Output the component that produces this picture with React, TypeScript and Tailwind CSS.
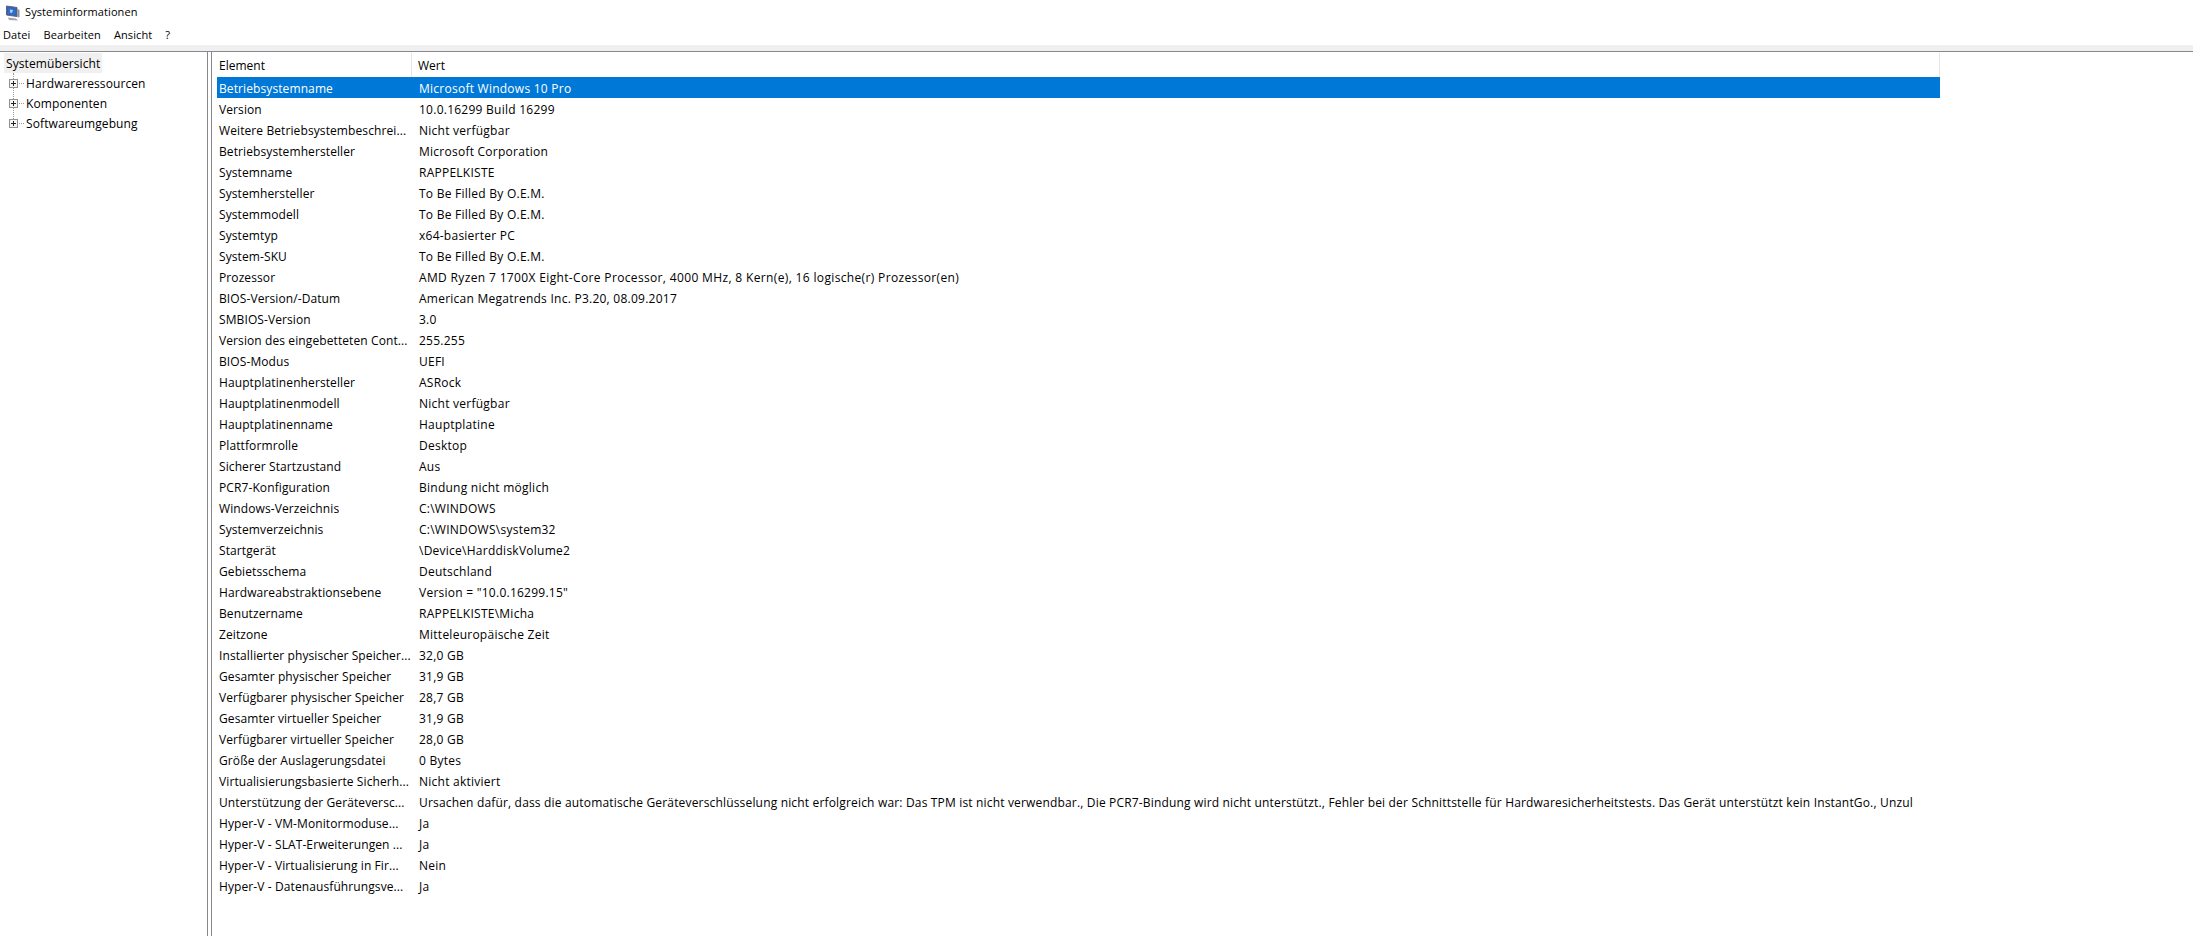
import React from 'react';

const rows: [string, string][] = [
  ['Betriebsystemname', 'Microsoft Windows 10 Pro'],
  ['Version', '10.0.16299 Build 16299'],
  ['Weitere Betriebsystembeschrei...', 'Nicht verfügbar'],
  ['Betriebsystemhersteller', 'Microsoft Corporation'],
  ['Systemname', 'RAPPELKISTE'],
  ['Systemhersteller', 'To Be Filled By O.E.M.'],
  ['Systemmodell', 'To Be Filled By O.E.M.'],
  ['Systemtyp', 'x64-basierter PC'],
  ['System-SKU', 'To Be Filled By O.E.M.'],
  ['Prozessor', 'AMD Ryzen 7 1700X Eight-Core Processor, 4000 MHz, 8 Kern(e), 16 logische(r) Prozessor(en)'],
  ['BIOS-Version/-Datum', 'American Megatrends Inc. P3.20, 08.09.2017'],
  ['SMBIOS-Version', '3.0'],
  ['Version des eingebetteten Cont...', '255.255'],
  ['BIOS-Modus', 'UEFI'],
  ['Hauptplatinenhersteller', 'ASRock'],
  ['Hauptplatinenmodell', 'Nicht verfügbar'],
  ['Hauptplatinenname', 'Hauptplatine'],
  ['Plattformrolle', 'Desktop'],
  ['Sicherer Startzustand', 'Aus'],
  ['PCR7-Konfiguration', 'Bindung nicht möglich'],
  ['Windows-Verzeichnis', 'C:\\WINDOWS'],
  ['Systemverzeichnis', 'C:\\WINDOWS\\system32'],
  ['Startgerät', '\\Device\\HarddiskVolume2'],
  ['Gebietsschema', 'Deutschland'],
  ['Hardwareabstraktionsebene', 'Version = "10.0.16299.15"'],
  ['Benutzername', 'RAPPELKISTE\\Micha'],
  ['Zeitzone', 'Mitteleuropäische Zeit'],
  ['Installierter physischer Speicher...', '32,0 GB'],
  ['Gesamter physischer Speicher', '31,9 GB'],
  ['Verfügbarer physischer Speicher', '28,7 GB'],
  ['Gesamter virtueller Speicher', '31,9 GB'],
  ['Verfügbarer virtueller Speicher', '28,0 GB'],
  ['Größe der Auslagerungsdatei', '0 Bytes'],
  ['Virtualisierungsbasierte Sicherh...', 'Nicht aktiviert'],
  ['Unterstützung der Geräteversc...', 'Ursachen dafür, dass die automatische Geräteverschlüsselung nicht erfolgreich war: Das TPM ist nicht verwendbar., Die PCR7-Bindung wird nicht unterstützt., Fehler bei der Schnittstelle für Hardwaresicherheitstests. Das Gerät unterstützt kein InstantGo., Unzul'],
  ['Hyper-V - VM-Monitormoduse...', 'Ja'],
  ['Hyper-V - SLAT-Erweiterungen ...', 'Ja'],
  ['Hyper-V - Virtualisierung in Fir...', 'Nein'],
  ['Hyper-V - Datenausführungsve...', 'Ja'],
];

const AppIcon = () => (
  <svg width="16" height="16" viewBox="0 0 16 16" className="shrink-0">
    <path d="M1.5 1 L12 2.5 V11.5 L1.5 10 Z" fill="#3f5f9e" stroke="#5a6480" strokeWidth="1" />
    <path d="M3 3 L10.5 4 V10 L3 9 Z" fill="#2b6fd6" />
    <path d="M5 4.5 L8 5 L7 8 L5 7.5 Z" fill="#a8d0f5" />
    <path d="M3 12.5 L11 13.5 L13 15.5 L4 15 Z" fill="#a3a6ad" />
    <path d="M12.5 4 L14.5 5 V12 L12.5 12.5 Z" fill="#8d919a" />
  </svg>
);

const TreeItem = ({label}: {label: string}) => (
  <div className="flex items-center h-5 pl-[9px] gap-[1px]">
    <svg width="9" height="9" viewBox="0 0 9 9" className="shrink-0 relative">
      <rect x="0.5" y="0.5" width="8" height="8" fill="#f4f4f4" stroke="#919191" />
      <path d="M2 4.5 H7 M4.5 2 V7" stroke="#222" />
    </svg>
    <span className="w-[5px] border-t border-dotted border-[#999] mr-[1px]" />
    <span className="tracking-[0.1px] pt-[1px]">{label}</span>
  </div>
);

const App = () => {
  return (
    <div className="w-[2193px] h-[936px] flex flex-col bg-white text-[12px] text-black overflow-hidden font-['Open_Sans','Noto_Sans',sans-serif]">
      <div className="h-[25px] flex items-center pl-[5px] gap-[4px] shrink-0 text-[11px] tracking-[0.1px]">
        <AppIcon />
        <span>Systeminformationen</span>
      </div>
      <div className="h-[20px] flex items-center pl-[3px] gap-[13px] shrink-0 text-[11px] tracking-[0.1px]">
        <span>Datei</span>
        <span>Bearbeiten</span>
        <span>Ansicht</span>
        <span>?</span>
      </div>
      <div className="h-[6px] bg-[#f0f0f0] shrink-0" />
      <div className="flex-1 flex border-t border-[#87878f] min-h-0 pr-[1px]">
        <div className="w-[207px] shrink-0 pt-[1px] relative">
          <div className="absolute left-[13px] top-[21px] h-[50px] border-l border-dotted border-[#999]" />
          <div className="ml-[4px] w-fit h-5 px-[2px] pt-[1px] flex items-center bg-[#f0f0f0] tracking-[0.1px]">Systemübersicht</div>
          <TreeItem label="Hardwareressourcen" />
          <TreeItem label="Komponenten" />
          <TreeItem label="Softwareumgebung" />
        </div>
        <div className="w-[5px] shrink-0 border-x border-[#87878f]" />
        <div className="pl-[5px] pt-[1px] flex-1 min-w-0">
          <div className="w-[1723px]">
            <div className="flex h-6 items-center">
              <div className="w-[195px] h-full flex items-center pl-[2px] pt-[1px] border-r border-[#e5e5e5]">Element</div>
              <div className="flex-1 h-full flex items-center pl-[6px] pt-[1px] border-r border-[#e5e5e5]">Wert</div>
            </div>
            {rows.map(([element, value], i) => (
              <div key={i} className={`flex h-[21px] items-center pt-[2px] ${i === 0 ? 'bg-[#0078d7] text-white' : ''}`}>
                <div className="w-[195px] pl-[2px] whitespace-nowrap overflow-hidden tracking-[0.1px]">{element}</div>
                <div className={`flex-1 pl-[7px] whitespace-nowrap overflow-hidden ${i === 9 ? 'tracking-[0.35px]' : i === 34 ? 'tracking-[0.17px]' : 'tracking-[0.25px]'}`}>{value}</div>
              </div>
            ))}
          </div>
        </div>
      </div>
    </div>
  );
};

export default App;
